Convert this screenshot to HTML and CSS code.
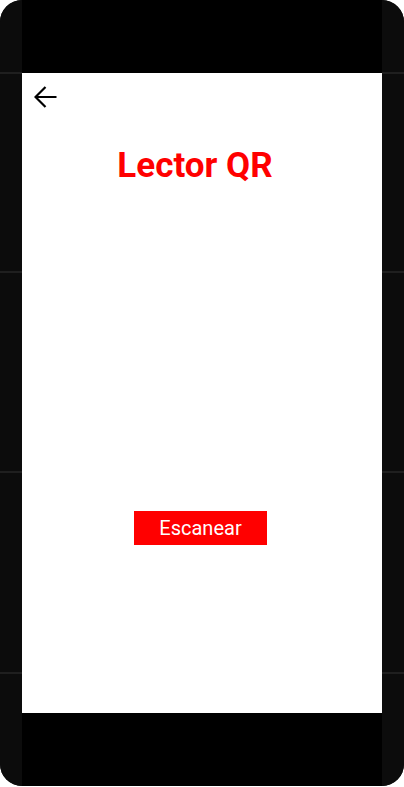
FILE: index.html
```html
<!DOCTYPE html>
<html lang="es">
<head>
<meta charset="utf-8">
<title>Lector QR</title>
<link rel="stylesheet" href="styles.css">
</head>
<body>
<div class="frame">
  <div class="side">
    <div class="seg seg-top"></div>
    <div class="seg seg-a"></div>
    <div class="seg seg-b"></div>
    <div class="seg seg-c"></div>
    <div class="seg seg-bottom"></div>
  </div>
  <div class="center">
    <div class="bezel-top"></div>
    <div class="screen">
      <button class="back" aria-label="Volver">
        <svg width="24" height="22" viewBox="0 0 24 22" aria-hidden="true">
          <path d="M1.5 11H22.5M11.5 1L1.5 11L11.5 21" fill="none" stroke="#000" stroke-width="2.2" stroke-linejoin="miter"/>
        </svg>
      </button>
      <h1 class="title">Lector QR</h1>
      <button class="scan">Escanear</button>
    </div>
    <div class="bezel-bottom"></div>
  </div>
  <div class="side">
    <div class="seg seg-top"></div>
    <div class="seg seg-a"></div>
    <div class="seg seg-b"></div>
    <div class="seg seg-c"></div>
    <div class="seg seg-bottom"></div>
  </div>
</div>
</body>
</html>
```

FILE: styles.css
```css
html, body {
  margin: 0;
  padding: 0;
  background: #ffffff;
}

.frame {
  width: 404px;
  height: 786px;
  border-radius: 22px;
  overflow: hidden;
  background: #0c0c0c;
  display: grid;
  grid-template-columns: 22px 360px 22px;
}

.side {
  display: flex;
  flex-direction: column;
}

.seg {
  background: #0c0c0c;
}

.seg-top { height: 72px; }
.seg-a, .seg-b, .seg-c, .seg-bottom {
  border-top: 2px solid #1f1f1f;
}
.seg-a { height: 197px; }
.seg-b { height: 198px; }
.seg-c { height: 199px; }
.seg-bottom { flex: 1; }

.center {
  display: flex;
  flex-direction: column;
}

.bezel-top {
  height: 73px;
  background: #000;
}

.bezel-bottom {
  flex: 1;
  background: #000;
}

.screen {
  height: 640px;
  background: #fff;
  display: flex;
  flex-direction: column;
  align-items: center;
  padding-top: 13px;
  box-sizing: border-box;
}

.back {
  align-self: flex-start;
  margin-left: 12px;
  padding: 0;
  border: 0;
  background: transparent;
  width: 24px;
  height: 22px;
  display: block;
}

.back svg {
  display: block;
}

.title {
  margin: 38px 14px 0 0;
  font-family: Roboto, "Liberation Sans", sans-serif;
  font-weight: 700;
  font-size: 35px;
  line-height: 40px;
  color: #ff0000;
  text-align: center;
}

.scan {
  margin: 325px 3px 0 0;
  width: 133px;
  height: 34px;
  border: 0;
  padding: 0;
  background: #ff0000;
  color: #ffffff;
  font-family: Roboto, "Liberation Sans", sans-serif;
  font-size: 20px;
  font-weight: 400;
}
```
